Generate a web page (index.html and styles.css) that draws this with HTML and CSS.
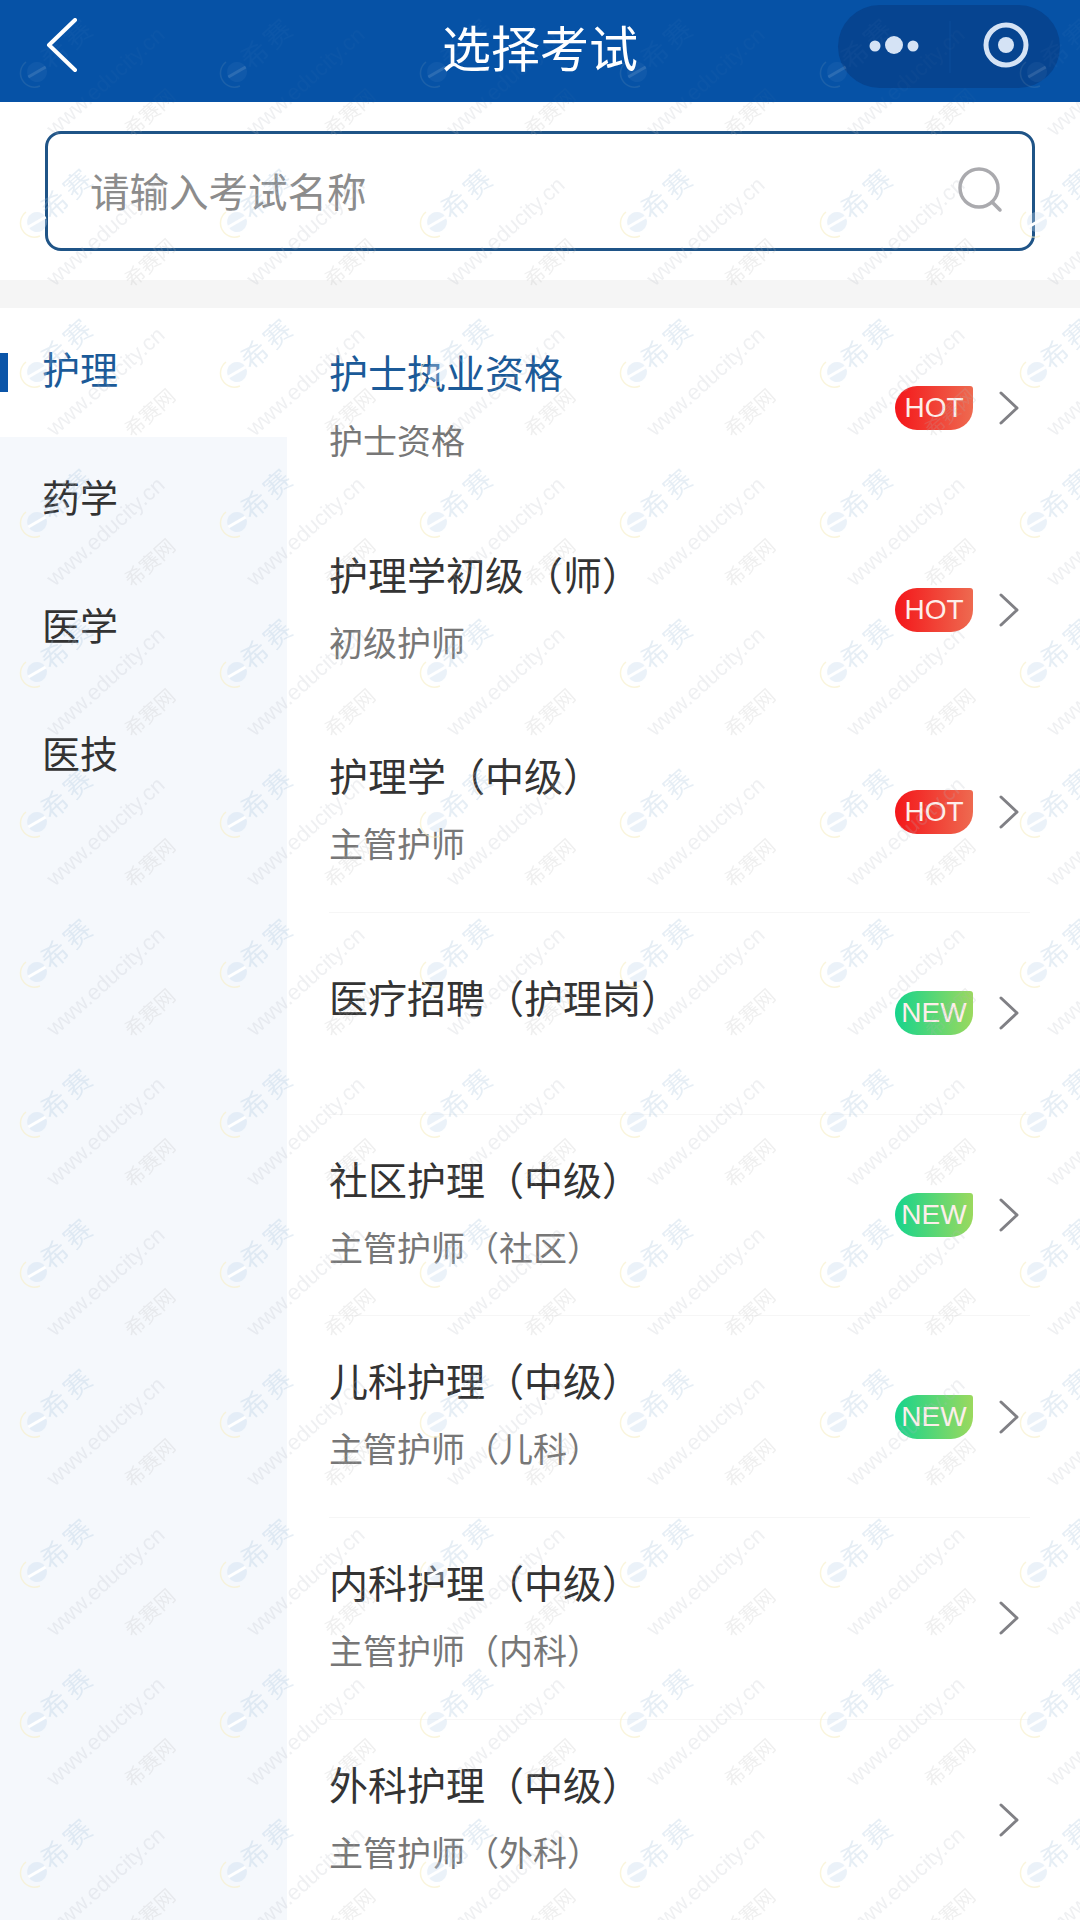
FILE: index.html
```html
<!DOCTYPE html>
<html lang="zh-CN">
<head>
    <meta charset="UTF-8">
    <meta name="viewport" content="width=device-width, initial-scale=1.0">
    <title>选择考试</title>
    <link rel="stylesheet" href="styles.css">
</head>
<body>
    <header class="top-bar">
        <svg class="back-icon" width="32" height="56" viewBox="0 0 32 56">
            <polyline points="29,2 3,27 29,52" fill="none" stroke="#fff" stroke-width="4" stroke-linecap="round" stroke-linejoin="round"/>
        </svg>
        <h1 class="page-title">选择考试</h1>
        <div class="capsule">
            <svg width="222" height="83" viewBox="0 0 222 83">
                <circle cx="37" cy="41" r="5.5" fill="#d5e3f5"/>
                <circle cx="56" cy="40" r="9" fill="#d5e3f5"/>
                <circle cx="75" cy="41" r="5.5" fill="#d5e3f5"/>
                <line x1="112" y1="16" x2="112" y2="68" stroke="#0b4c9a" stroke-width="1"/>
                <circle cx="168" cy="40" r="20" fill="none" stroke="#d5e3f5" stroke-width="5"/>
                <circle cx="168" cy="40" r="8" fill="#d5e3f5"/>
            </svg>
        </div>
    </header>

    <div class="search-area">
        <div class="search-box">
            <span class="search-placeholder">请输入考试名称</span>
            <svg width="48" height="48" viewBox="0 0 48 48">
                <circle cx="22" cy="21" r="19" fill="none" stroke="#aaaaae" stroke-width="3.5"/>
                <line x1="35" y1="35" x2="43" y2="43" stroke="#aaaaae" stroke-width="3.5" stroke-linecap="round"/>
            </svg>
        </div>
    </div>

    <div class="spacer"></div>

    <main class="content">
        <nav class="sidebar">
            <a class="side-item active">护理</a>
            <a class="side-item">药学</a>
            <a class="side-item">医学</a>
            <a class="side-item">医技</a>
        </nav>
        <div class="exam-list">
            <div class="exam-row">
                <div class="exam-text">
                    <div class="exam-name selected">护士执业资格</div>
                    <div class="exam-sub">护士资格</div>
                </div>
                <span class="tag tag-hot">HOT</span>
                <svg class="arrow" width="20" height="34" viewBox="0 0 20 34"><polyline points="2,2 18,17 2,32" fill="none" stroke="#808085" stroke-width="3" stroke-linecap="round" stroke-linejoin="round"/></svg>
            </div>
            <div class="exam-row">
                <div class="exam-text">
                    <div class="exam-name">护理学初级（师）</div>
                    <div class="exam-sub">初级护师</div>
                </div>
                <span class="tag tag-hot">HOT</span>
                <svg class="arrow" width="20" height="34" viewBox="0 0 20 34"><polyline points="2,2 18,17 2,32" fill="none" stroke="#808085" stroke-width="3" stroke-linecap="round" stroke-linejoin="round"/></svg>
            </div>
            <div class="exam-row">
                <div class="exam-text">
                    <div class="exam-name">护理学（中级）</div>
                    <div class="exam-sub">主管护师</div>
                </div>
                <span class="tag tag-hot">HOT</span>
                <svg class="arrow" width="20" height="34" viewBox="0 0 20 34"><polyline points="2,2 18,17 2,32" fill="none" stroke="#808085" stroke-width="3" stroke-linecap="round" stroke-linejoin="round"/></svg>
            </div>
            <div class="exam-row">
                <div class="exam-text single">
                    <div class="exam-name">医疗招聘（护理岗）</div>
                </div>
                <span class="tag tag-new">NEW</span>
                <svg class="arrow" width="20" height="34" viewBox="0 0 20 34"><polyline points="2,2 18,17 2,32" fill="none" stroke="#808085" stroke-width="3" stroke-linecap="round" stroke-linejoin="round"/></svg>
            </div>
            <div class="exam-row">
                <div class="exam-text">
                    <div class="exam-name">社区护理（中级）</div>
                    <div class="exam-sub">主管护师（社区）</div>
                </div>
                <span class="tag tag-new">NEW</span>
                <svg class="arrow" width="20" height="34" viewBox="0 0 20 34"><polyline points="2,2 18,17 2,32" fill="none" stroke="#808085" stroke-width="3" stroke-linecap="round" stroke-linejoin="round"/></svg>
            </div>
            <div class="exam-row">
                <div class="exam-text">
                    <div class="exam-name">儿科护理（中级）</div>
                    <div class="exam-sub">主管护师（儿科）</div>
                </div>
                <span class="tag tag-new">NEW</span>
                <svg class="arrow" width="20" height="34" viewBox="0 0 20 34"><polyline points="2,2 18,17 2,32" fill="none" stroke="#808085" stroke-width="3" stroke-linecap="round" stroke-linejoin="round"/></svg>
            </div>
            <div class="exam-row">
                <div class="exam-text">
                    <div class="exam-name">内科护理（中级）</div>
                    <div class="exam-sub">主管护师（内科）</div>
                </div>
                <svg class="arrow" width="20" height="34" viewBox="0 0 20 34"><polyline points="2,2 18,17 2,32" fill="none" stroke="#808085" stroke-width="3" stroke-linecap="round" stroke-linejoin="round"/></svg>
            </div>
            <div class="exam-row">
                <div class="exam-text">
                    <div class="exam-name">外科护理（中级）</div>
                    <div class="exam-sub">主管护师（外科）</div>
                </div>
                <svg class="arrow" width="20" height="34" viewBox="0 0 20 34"><polyline points="2,2 18,17 2,32" fill="none" stroke="#808085" stroke-width="3" stroke-linecap="round" stroke-linejoin="round"/></svg>
            </div>
        </div>
    </main>

    <!-- watermark laid over the whole page, much fainter on the blue bar -->
    <svg class="watermark" width="1080" height="1920">
        <defs>
            <pattern id="wm" x="0" y="0" width="200" height="150" patternUnits="userSpaceOnUse">
                <g transform="translate(37 72) rotate(-30)">
                    <circle r="10" fill="#c5d9ee" opacity="0.35"/>
                    <rect x="-10" y="-1.5" width="20" height="3" fill="#fff"/>
                </g>
                <path d="M26 62 A14 14 0 0 0 40 86" fill="none" stroke="#f6eec4" stroke-width="1.5" opacity="0.6"/>
                <text class="wm-logo" transform="translate(67.5 43) rotate(-42)" y="10" text-anchor="middle">希赛</text>
                <text class="wm-url" transform="translate(105 81) rotate(-42)" y="8" text-anchor="middle">www.educity.cn</text>
                <text class="wm-name" transform="translate(150 113) rotate(-42)" y="7" text-anchor="middle">希赛网</text>
            </pattern>
        </defs>
        <rect width="1080" height="102" fill="url(#wm)" opacity="0.15"/>
        <rect y="102" width="1080" height="1818" fill="url(#wm)"/>
    </svg>
</body>
</html>
```

FILE: styles.css
```css
html, body {
    margin: 0;
    padding: 0;
}
body {
    position: relative;
    width: 1080px;
    height: 1920px;
    overflow: hidden;
    background-color: #fff;
    font-family: "Noto Sans CJK SC", "Liberation Sans", sans-serif;
    color: #333;
}
.top-bar {
    display: grid;
    grid-template-columns: 1fr auto 1fr;
    align-items: center;
    box-sizing: border-box;
    height: 102px;
    padding: 0 20px 10px;
    background-color: #0652a6;
}
.back-icon {
    margin-left: 26px;
}
.page-title {
    margin: 0;
    color: #fff;
    font-size: 49px;
    font-weight: 400;
    line-height: 60px;
}
.capsule {
    justify-self: end;
    display: flex;
    width: 222px;
    height: 83px;
    border-radius: 42px;
    background-color: #064490;
}
.search-area {
    padding: 29px 46px 29px 45px;
}
.search-box {
    display: flex;
    align-items: center;
    justify-content: space-between;
    box-sizing: border-box;
    height: 120px;
    width: 990px;
    padding: 0 27px 0 42px;
    border: 3px solid #1f5487;
    border-radius: 16px;
}
.search-placeholder {
    margin-bottom: 2px;
    color: #8c8c8c;
    font-size: 39.5px;
    line-height: 50px;
}
.spacer {
    height: 28px;
    background-color: #f5f5f5;
}
.content {
    display: flex;
    height: 1612px;
}
.sidebar {
    display: flex;
    flex-direction: column;
    flex-shrink: 0;
    width: 287px;
    background-color: #f5f8fc;
}
.side-item {
    position: relative;
    display: flex;
    align-items: center;
    box-sizing: border-box;
    height: 128px;
    padding: 0 0 11px 42px;
    font-size: 38px;
    color: #333;
}
.side-item.active {
    height: 129px;
    background-color: #fff;
    color: #1b5a98;
}
.side-item.active::before {
    content: "";
    position: absolute;
    left: 0;
    top: 45px;
    width: 8px;
    height: 39px;
    background-color: #0b55a8;
}
.exam-list {
    flex: 1;
    padding: 0 50px 0 42px;
}
.exam-row {
    display: flex;
    align-items: center;
    box-sizing: border-box;
    height: 201.7px;
    padding-right: 11px;
    border-bottom: 1px solid #f6f6f6;
}
.exam-row:nth-child(-n+2) {
    border-bottom-color: transparent;
}
.exam-text {
    flex: 1;
    align-self: flex-start;
    padding-top: 35px;
}
.exam-text.single {
    padding-top: 55px;
}
.exam-name {
    font-size: 39px;
    line-height: 56px;
    color: #333;
}
.exam-name.selected {
    color: #1b5a98;
}
.exam-sub {
    margin-top: 18px;
    font-size: 34px;
    line-height: 46px;
    color: #777;
}
.tag {
    box-sizing: border-box;
    width: 78px;
    height: 44px;
    margin-right: 26px;
    border-radius: 22px 3px 22px 22px;
    color: #fdeeea;
    font-family: "Liberation Sans", sans-serif;
    font-size: 28px;
    line-height: 44px;
    text-align: center;
}
.tag-hot {
    background: linear-gradient(90deg, #f4161a, #ee6a50);
}
.tag-new {
    background: linear-gradient(90deg, #16d48c, #9bd95e);
}
.watermark {
    position: absolute;
    left: 0;
    top: 0;
    pointer-events: none;
}
.wm-logo {
    font-size: 27px;
    letter-spacing: 4px;
    fill: #9dbcd8;
    fill-opacity: 0.25;
}
.wm-url {
    font-family: "Liberation Sans", sans-serif;
    font-size: 22px;
    fill: #b0b6bc;
    fill-opacity: 0.2;
}
.wm-name {
    font-size: 20px;
    fill: #b0b0b0;
    fill-opacity: 0.2;
}
```
